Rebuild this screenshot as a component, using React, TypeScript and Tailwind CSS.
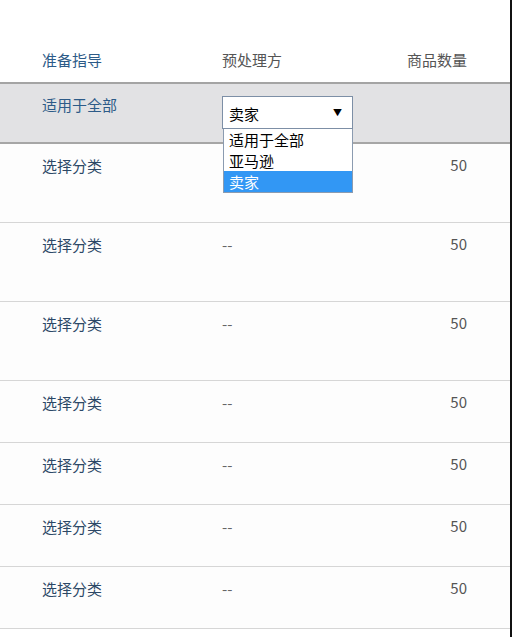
const rows = [
  { h: "h-[78px]", dash: false },
  { h: "h-[78px]", dash: true },
  { h: "h-[78px]", dash: true },
  { h: "h-[61px]", dash: true },
  { h: "h-[61px]", dash: true },
  { h: "h-[61px]", dash: true },
  { h: "h-[61px]", dash: true },
];

const font = { fontFamily: '"Noto Sans CJK SC", "Noto Sans", sans-serif' };

export default function App() {
  return (
    <div className="w-full h-[637px] overflow-hidden bg-white flex" style={font}>
      <div className="flex-1 h-full text-[15px]">
        {/* header */}
        <div className="h-[84px] pt-[49px] flex leading-[22px] border-b-2 border-[#a4a4a4]">
          <div className="w-[222px] pl-[42px] text-[#2d5b88]">准备指导</div>
          <div className="flex-1 text-[#555]">预处理方</div>
          <div className="pr-[43px] text-[#555]">商品数量</div>
        </div>

        {/* active row */}
        <div className="relative z-10 h-[60px] flex bg-[#e2e2e4] border-b-2 border-[#a6a6a6] leading-[22px]">
          <div className="w-[222px] pl-[42px] pt-[10px] text-[#2d5b88]">适用于全部</div>
          <div className="relative pt-[12px]">
            <div className="w-[131px] h-[33px] flex items-center justify-between pl-[6px] pr-[10px] bg-white border border-[#7d8fa6] text-black">
              <span className="pt-[2px]">卖家</span>
              <span className="text-[9px] pt-[1px]">▼</span>
            </div>
            <div className="absolute left-[1px] top-[45px] w-[130px] bg-white border border-[#8b9bb0] border-t-0 text-black leading-[21px]">
              <div className="pl-[5px]">适用于全部</div>
              <div className="pl-[5px]">亚马逊</div>
              <div className="pl-[5px] bg-[#3297f4] text-white">卖家</div>
            </div>
          </div>
        </div>

        {rows.map((r, i) => (
          <div key={i} className={`${r.h} box-content flex leading-[22px] border-b border-[#d6d6d6] bg-[#fdfdfd]`}>
            <div className="w-[222px] pl-[42px] pt-[11px] text-[#2c4866]">选择分类</div>
            <div className="flex-1 pt-[11px] text-[#666]">{r.dash ? "--" : ""}</div>
            <div className="pr-[43px] pt-[10px] text-[#555]">50</div>
          </div>
        ))}
      </div>
      <div className="w-[2px] h-full bg-[#111]" />
    </div>
  );
}
